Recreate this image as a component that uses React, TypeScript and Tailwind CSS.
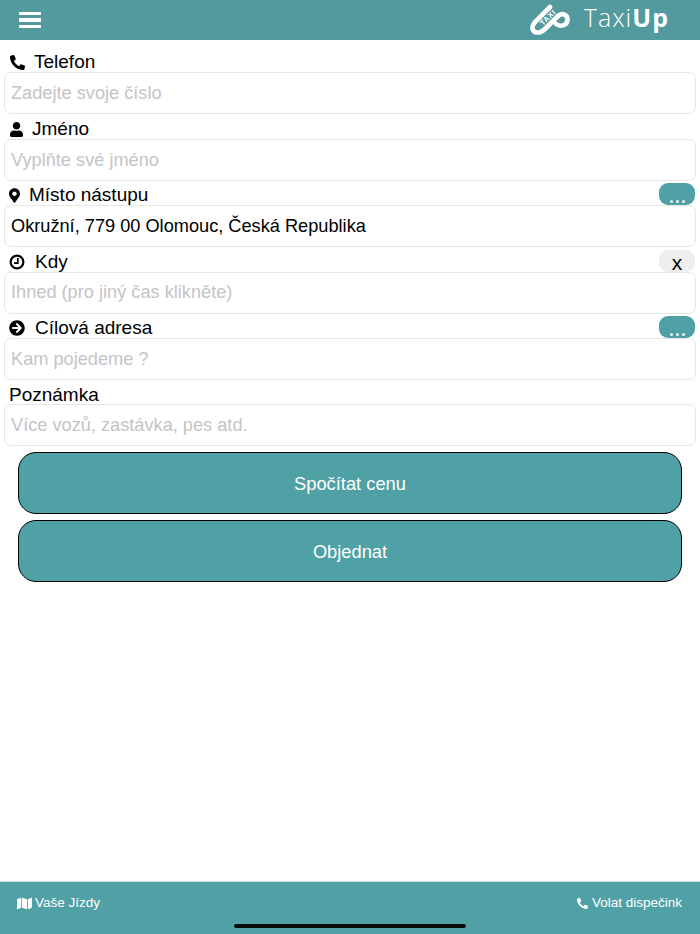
import { FaArrowCircleRight, FaMapMarkerAlt, FaMap, FaPhone, FaUser } from "react-icons/fa";
import type { ReactNode } from "react";

const Field = ({ icon, label, placeholder, value, action }: { icon?: ReactNode; label: string; placeholder?: string; value?: string; action?: ReactNode }) => (
  <div className="h-[66.45px] flex flex-col">
    <div className="h-[24.45px] flex items-end pl-[9px] pr-[5px] relative">
      <div className="flex items-center h-[22px] text-[19px] text-black pt-[3px]">
        {icon}
        <span>{label}</span>
      </div>
      {action}
    </div>
    <div className={`h-[42px] ml-[4px] mr-[4px] bg-white border border-[#e6e6e6] rounded-[7px] flex items-center pl-[6px] pt-px text-[18.2px] ${value ? "text-black" : "text-[#c4c4c4]"}`}>
      {value ?? placeholder}
    </div>
  </div>
);

const DotsButton = () => (
  <div className="absolute right-[5px] top-[2.4px] w-[36px] h-[22px] bg-[#4fa1a5] rounded-[9px] flex items-end justify-center gap-[3px] pb-[2px]">
    <span className="w-[3px] h-[3px] bg-[#f0f0f0] rounded-full"></span>
    <span className="w-[3px] h-[3px] bg-[#f0f0f0] rounded-full"></span>
    <span className="w-[3px] h-[3px] bg-[#f0f0f0] rounded-full"></span>
  </div>
);

const ClearButton = () => (
  <div className="absolute right-[5px] top-[2.4px] w-[36px] h-[22px] bg-[#eeeeee] rounded-[9px] flex items-center justify-center text-[21px] leading-none text-black pt-[4px]">
    x
  </div>
);

const ClockIcon = () => (
  <svg className="w-[16px] h-[16px] mr-[10px]" viewBox="0 0 16 16" fill="none" stroke="currentColor">
    <circle cx="8" cy="8" r="6.4" strokeWidth="2.2" />
    <path d="M8.8 4 V9.2 H5" strokeWidth="1.7" />
  </svg>
);

const Logo = () => (
  <svg width="42" height="34" viewBox="0 0 42 34" fill="none" stroke="#fff">
    <path d="M21 4 L6 19 C1 25 4 30 10 29.5 C13 29 15 27 17 25 L29 13" strokeWidth="4.6" strokeLinecap="round" />
    <path d="M29 13 C33 9 39 12 38.5 17 C38 23 31 24 27 21" strokeWidth="4.6" strokeLinecap="round" />
    <text transform="translate(14 23) rotate(-45)" fontSize="7.5" fontWeight="700" letterSpacing="0.6" fill="#fff" stroke="none" fontFamily="Liberation Sans, sans-serif">TAXI</text>
  </svg>
);

const App = () => {
  return (
    <div className="w-[700px] h-[934px] bg-white flex flex-col overflow-hidden font-['Liberation_Sans',Arial,sans-serif]">
      <header className="h-[40px] bg-[#539a9e] flex items-center justify-between pl-[19px] pr-[31px] shrink-0">
        <div className="w-[22px] flex flex-col gap-[3px]">
          <div className="h-[3.5px] bg-white"></div>
          <div className="h-[3.5px] bg-white"></div>
          <div className="h-[3.5px] bg-white"></div>
        </div>
        <div className="flex items-center gap-[13px]">
          <Logo />
          <div className="text-[25px] text-white tracking-[1px] font-['Open_Sans',sans-serif] font-light leading-none pb-[5px]">
            Taxi<span className="font-bold">Up</span>
          </div>
        </div>
      </header>

      <main className="flex-1 flex flex-col pt-[7.8px]">
        <Field icon={<FaPhone className="text-[15px] mr-[9px] ml-px -scale-x-100" />} label="Telefon" placeholder="Zadejte svoje číslo" />
        <Field icon={<FaUser className="w-[13px] h-[15px] ml-px mr-[9px]" />} label="Jméno" placeholder="Vyplňte své jméno" />
        <Field icon={<FaMapMarkerAlt className="w-[11px] h-[15px] mr-[9px]" />} label="Místo nástupu" value="Okružní, 779 00 Olomouc, Česká Republika" action={<DotsButton />} />
        <Field icon={<ClockIcon />} label="Kdy" placeholder="Ihned (pro jiný čas klikněte)" action={<ClearButton />} />
        <Field icon={<FaArrowCircleRight className="text-[16px] mr-[10px]" />} label="Cílová adresa" placeholder="Kam pojedeme ?" action={<DotsButton />} />
        <Field label="Poznámka" placeholder="Více vozů, zastávka, pes atd." />

        <div className="flex flex-col gap-[6px] px-[18px] mt-[5.5px]">
          <button className="h-[62px] bg-[#4fa1a5] border border-black rounded-[18px] text-white text-[18.3px] pt-[1px]">Spočítat cenu</button>
          <button className="h-[62px] bg-[#4fa1a5] border border-black rounded-[18px] text-white text-[18.3px] pt-[1px]">Objednat</button>
        </div>
      </main>

      <footer className="h-[53px] bg-[#4fa1a5] border-t border-[#d8d8d8] shrink-0 relative flex items-start justify-between pl-[17px] pr-[18px] pt-[11px] text-white text-[13.5px]">
        <div className="flex items-center gap-[3px]"><FaMap className="text-[15px]" />Vaše Jízdy</div>
        <div className="flex items-center gap-[4px]"><FaPhone className="text-[11px] -scale-x-100" />Volat dispečink</div>
        <div className="absolute left-[234px] bottom-[6px] w-[232px] h-[4.5px] rounded-full bg-[#0b0b0b]"></div>
      </footer>
    </div>
  );
};

export default App;
